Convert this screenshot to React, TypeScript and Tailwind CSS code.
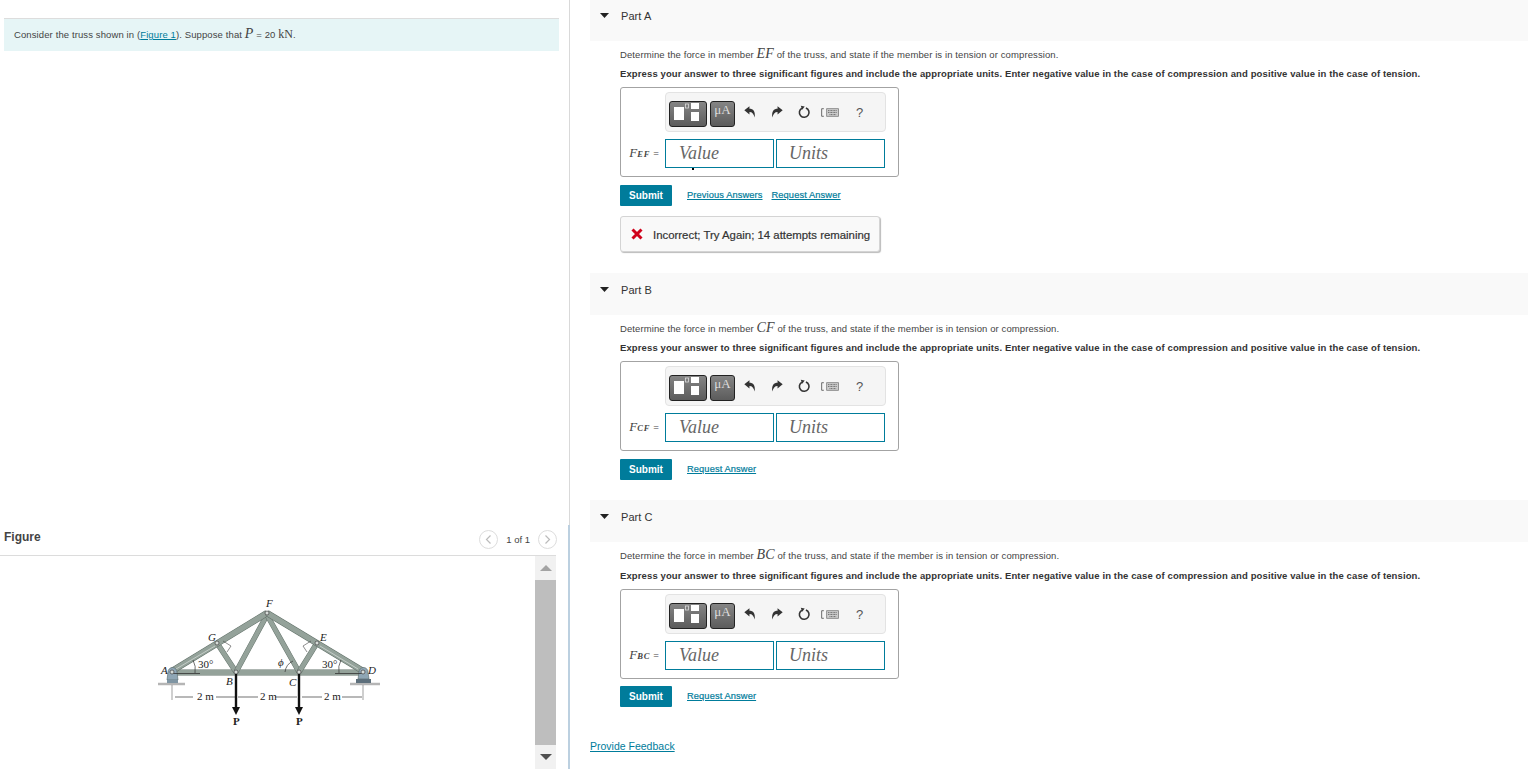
import React from "react";

const M = ({ children }: { children: React.ReactNode }) => (
  <span className="font-['Liberation_Serif',serif] italic text-[14px] leading-none">{children}</span>
);

function Undo({ flip }: { flip?: boolean }) {
  return (
    <svg width="12" height="12" viewBox="0 0 11 11" className={flip ? "-scale-x-100" : ""}>
      <path d="M0.3 4 L5 0.3 V2.6 C8.4 2.6 10.6 4.8 9.8 10.6 C8.9 7.4 7.6 5.6 5 5.6 V7.8 Z" fill="#333" />
    </svg>
  );
}

function Toolbar() {
  return (
    <div className="w-[221px] h-[40px] ml-[44px] bg-[#f5f5f5] border border-[#e3e3e3] rounded-[4px] flex items-center pl-[3px]">
      <div className="mt-[3px] w-[38px] h-[26px] rounded-[3px] border border-[#222] bg-gradient-to-b from-[#858585] to-[#5c5c5c] flex items-center">
        <svg width="36" height="24" viewBox="0 0 36 24">
          <rect x="4" y="5" width="10" height="13" fill="#fff" />
          <rect x="21" y="1" width="8" height="6" fill="#fff" />
          <rect x="21" y="10" width="8" height="9" fill="#fff" />
          <rect x="15.5" y="2" width="3" height="4" fill="none" stroke="#ddd" strokeWidth="0.8" />
        </svg>
      </div>
      <div className="mt-[3px] ml-[3px] w-[25px] h-[26px] rounded-[3px] border border-[#222] bg-gradient-to-b from-[#858585] to-[#5c5c5c] text-[#ddd] text-[13px] leading-[15px] text-center font-['Liberation_Serif',serif]">
        μA
      </div>
      <div className="ml-[9px]"><Undo /></div>
      <div className="ml-[15px]"><Undo flip /></div>
      <svg className="ml-[15px]" width="13" height="14" viewBox="0 0 14 14" fill="none">
        <path d="M8.5 2.6 A5.2 5.2 0 1 1 4.2 2.9" stroke="#333" strokeWidth="1.7" />
        <path d="M3 0.4 L7.2 1 L4.6 4.6 Z" fill="#333" />
      </svg>
      <svg className="ml-[10px]" width="18" height="9" viewBox="0 0 19 9">
        <path d="M3 0.5 H0.7 V8.5 H3" fill="none" stroke="#555" strokeWidth="0.9" />
        <rect x="6" y="0.5" width="12.5" height="8" fill="#ccc" stroke="#777" strokeWidth="0.8" />
        <path d="M7.5 2.5 H17 M7.5 4.5 H17 M9 6.7 H16" stroke="#666" strokeWidth="1" strokeDasharray="1 0.6" />
      </svg>
      <span className="ml-[17px] text-[13px] text-[#555] leading-none">?</span>
    </div>
  );
}

function Part({
  name,
  member,
  sub,
  previous,
  feedback,
  gap,
  headerH,
  labelPad,
  exprGap,
  boxGap,
  submitGap,
}: {
  name: string;
  member: string;
  sub: string;
  previous?: boolean;
  feedback?: boolean;
  gap: string;
  headerH: string;
  labelPad: string;
  exprGap: string;
  boxGap: string;
  submitGap: string;
}) {
  const link = "text-[9.3px] tracking-[0.1px] text-[#007c9b] underline [-webkit-text-stroke:0.2px_#007c9b]";
  return (
    <section className={gap}>
      <div className={`${headerH} ${labelPad} bg-[#f9f9f9] flex items-start`}>
        <svg className="ml-[10px] mt-[3px]" width="9" height="5" viewBox="0 0 9 5">
          <path d="M0 0 H9 L4.5 5 Z" fill="#222" />
        </svg>
        <span className="ml-[12px] text-[11px] leading-[13px] text-[#333] tracking-[0.05px]">Part {name}</span>
      </div>
      <div className="pl-[30px]">
        <p className="mt-[6px] h-[16px] leading-[16px] text-[9.5px] text-[#444] tracking-[0.1px]">
          Determine the force in member <M>{member}</M> of the truss, and state if the member is in tension or compression.
        </p>
        <p className={`${exprGap} h-[16px] leading-[16px] text-[9.5px] font-bold text-[#333] tracking-[0.115px]`}>
          Express your answer to three significant figures and include the appropriate units. Enter negative value in the case of compression and positive value in the case of tension.
        </p>
        <div className={`${boxGap} w-[279px] h-[90px] border border-[#a3a3a3] rounded-[3px] pt-[4px]`}>
          <Toolbar />
          <div className="flex items-center mt-[7px] h-[29px]">
            <span className="w-[44px] text-right pr-[6px] -mt-[1px] text-[#444] font-['Liberation_Serif',serif] italic text-[13px] whitespace-nowrap">
              F<span className="text-[8.5px] font-bold tracking-[0.8px]">{sub}</span> <span className="not-italic text-[10px]">=</span>
            </span>
            <div className="relative w-[109px] h-[29px] border border-[#007c9b] pl-[13px] font-['Liberation_Serif',serif] italic text-[#666] text-[18px] leading-[27px]">
              Value
              {previous && <span className="absolute left-[26px] top-[28px] w-[2px] h-[2px] bg-black" />}
            </div>
            <div className="ml-[2px] w-[109px] h-[29px] border border-[#007c9b] pl-[12px] font-['Liberation_Serif',serif] italic text-[#666] text-[18px] leading-[27px]">Units</div>
          </div>
        </div>
        <div className={`${submitGap} flex items-center h-[21px]`}>
          <div className="w-[52px] h-[21px] bg-[#007c9b] rounded-[1px] text-white font-bold text-[10px] leading-[21px] text-center">Submit</div>
          {previous && <a className={`ml-[15px] ${link}`}>Previous Answers</a>}
          <a className={`${previous ? "ml-[9px]" : "ml-[15px]"} ${link}`}>Request Answer</a>
        </div>
        {feedback && (
          <div className="mt-[10px] w-[260px] h-[36px] bg-[#f9f9f9] border border-[#d4d4d4] rounded-[3px] shadow-[1px_1px_1px_#bbb] flex items-center pl-[10px]">
            <svg width="12" height="12" viewBox="0 0 12 12">
              <path d="M1.5 1.5 L10.5 10.5 M10.5 1.5 L1.5 10.5" stroke="#d0021b" strokeWidth="3" />
            </svg>
            <span className="ml-[10px] mt-[4px] text-[11.4px] text-[#333] [-webkit-text-stroke:0.2px_#333]">Incorrect; Try Again; 14 attempts remaining</span>
          </div>
        )}
      </div>
    </section>
  );
}

function Truss() {
  const m = "#94a29a";
  const e = "#5f6e66";
  const bar = (x1: number, y1: number, x2: number, y2: number, w = 5) => (
    <g>
      <line x1={x1} y1={y1} x2={x2} y2={y2} stroke={e} strokeWidth={w + 0.8} />
      <line x1={x1} y1={y1} x2={x2} y2={y2} stroke={m} strokeWidth={w} />
    </g>
  );
  const pin = (x: number, y: number) => <circle cx={x} cy={y} r="2" fill="#d6dcd8" stroke="#444" strokeWidth="0.7" />;
  return (
    <svg width="250" height="140" viewBox="0 0 250 140" className="font-['Liberation_Serif',serif]" fill="#222">
      <path d="M18 94 H45" stroke="#b5b5b5" strokeWidth="2.5" />
      <path d="M210 94 H240" stroke="#b5b5b5" strokeWidth="2.5" />
      {bar(32, 82.5, 223, 82.5, 5)}
      {bar(77, 53, 96, 82, 4.5)}
      {bar(96, 82, 127, 25, 4.5)}
      {bar(159, 82, 127, 25, 4.5)}
      {bar(177, 53, 159, 82, 4.5)}
      {bar(32, 81, 127, 23, 5.5)}
      {bar(223, 81, 127, 23, 5.5)}
      <path d="M36 79 L75 56 M218 79 L180 56" stroke="#e4e9e6" strokeWidth="0.6" />
      <path d="M83 51 L91 56 L87 62 M171 51 L163 56 L167 62" fill="none" stroke="#444" strokeWidth="0.6" />
      <path d="M27 90 L28 82 A4.5 4.5 0 0 1 37 82 L38 90 Z" fill="#8fa6b5" stroke="#566" strokeWidth="0.6" />
      <rect x="27" y="90" width="11" height="3" fill="#7f95a3" />
      <path d="M218 89 L219 82 A4.5 4.5 0 0 1 228 82 L229 89 Z" fill="#8fa6b5" stroke="#566" strokeWidth="0.6" />
      <rect x="216" y="89" width="15" height="4" fill="#5d6f7b" />
      <path d="M33 83.5 H60 M195 83.5 H223" stroke="#333" strokeWidth="0.8" />
      <path d="M53 70 A20 20 0 0 1 55 83 M201 70 A20 20 0 0 0 199 83 M145 82 A14 14 0 0 1 153 71" fill="none" stroke="#333" strokeWidth="0.7" />
      {pin(32, 82)}{pin(96, 82)}{pin(159, 82)}{pin(223, 82)}{pin(77, 53)}{pin(177, 53)}{pin(127, 23)}
      <path d="M32 95 V110 M223 95 V110" stroke="#777" strokeWidth="0.7" />
      <path d="M35 107 H53 M76 107 H95 M98 107 H118 M135 107 H157 M162 107 H182 M202 107 H222" stroke="#333" strokeWidth="0.7" />
      <path d="M96 84 V118" stroke="#111" strokeWidth="2.4" />
      <path d="M92 117 H100 L96 125 Z" fill="#111" />
      <path d="M159 84 V118" stroke="#111" strokeWidth="2.4" />
      <path d="M155 117 H163 L159 125 Z" fill="#111" />
      <g fontSize="11">
        <text x="57" y="110">2 m</text>
        <text x="120" y="110">2 m</text>
        <text x="184" y="110">2 m</text>
        <text x="58" y="78">30°</text>
        <text x="182" y="78">30°</text>
      </g>
      <g fontSize="11" fontStyle="italic">
        <text x="21" y="84">A</text>
        <text x="86" y="95">B</text>
        <text x="149" y="96">C</text>
        <text x="228" y="84">D</text>
        <text x="180" y="51">E</text>
        <text x="126" y="17">F</text>
        <text x="68" y="51">G</text>
        <text x="138" y="76">ϕ</text>
      </g>
      <g fontSize="11" fontWeight="bold">
        <text x="93" y="135">P</text>
        <text x="156" y="135">P</text>
      </g>
    </svg>
  );
}

function Pager() {
  const C = ({ d, c }: { d: string; c: string }) => (
    <div className="w-[19px] h-[19px] rounded-full border border-[#ddd] flex items-center justify-center">
      <svg width="7" height="9" viewBox="0 0 7 9" fill="none">
        <path d={d} stroke={c} strokeWidth="1.2" />
      </svg>
    </div>
  );
  return (
    <div className="flex items-center">
      <C d="M5.5 0.5 L1.5 4.5 L5.5 8.5" c="#bbb" />
      <span className="mx-[8px] text-[9.5px] text-[#444] mt-[1px]">1 of 1</span>
      <C d="M1.5 0.5 L5.5 4.5 L1.5 8.5" c="#bbb" />
    </div>
  );
}

export default function App() {
  return (
    <div className="h-[769px] w-[1528px] overflow-hidden flex bg-white font-['Liberation_Sans',Arial,sans-serif]">
      <aside className="w-[570px] shrink-0 flex flex-col">
        <div className="h-[525px] border-r border-[#d9d9d9] pt-[18px]">
          <div className="ml-[4px] w-[555px] h-[33px] bg-[#e6f5f6] border-t border-[#ddd] pl-[10px] pb-[2px] flex items-center text-[9.5px] text-[#444] tracking-[0.11px]">
            <span>
              Consider the truss shown in (<a className="text-[#007c9b] underline">Figure 1</a>). Suppose that <M>P</M> = 20 <span className="font-['Liberation_Serif',serif] text-[12px]">kN</span>.
            </span>
          </div>
        </div>
        <div className="flex-1 border-r-2 border-[#bcd0e0] flex flex-col">
          <div className="h-[30px] w-[559px] flex justify-between pl-[4px] pr-[2px]">
            <span className="text-[12px] font-bold text-[#444] mt-[3px]">Figure</span>
            <div className="mt-[5px]"><Pager /></div>
          </div>
          <div className="flex-1 w-[556px] border-t border-[#dcdcdc] flex">
            <div className="w-[535px] pl-[140px] pt-[34px]"><Truss /></div>
            <div className="w-[21px] bg-[#f1f1f1] flex flex-col items-center">
              <svg className="mt-[9px]" width="12" height="6" viewBox="0 0 12 6"><path d="M0 6 H12 L6 0 Z" fill="#a3a3a3" /></svg>
              <div className="mt-[9px] w-full flex-1 bg-[#bebebe]" />
              <svg className="my-[9px]" width="12" height="6" viewBox="0 0 12 6"><path d="M0 0 H12 L6 6 Z" fill="#505050" /></svg>
            </div>
          </div>
        </div>
      </aside>
      <main className="flex-1 pl-[20px]">
        <Part name="A" member="EF" sub="EF" previous feedback gap="mb-[21px]" headerH="h-[41px]" labelPad="pt-[10px]" exprGap="mt-[3px]" boxGap="mt-[5px]" submitGap="mt-[8px]" />
        <Part name="B" member="CF" sub="CF" gap="mb-[20px]" headerH="h-[42px]" labelPad="pt-[11px]" exprGap="mt-[3px]" boxGap="mt-[5px]" submitGap="mt-[8px]" />
        <Part name="C" member="BC" sub="BC" gap="mb-[26px]" headerH="h-[42px]" labelPad="pt-[11px]" exprGap="mt-[4px]" boxGap="mt-[5px]" submitGap="mt-[7px]" />
        <a className="text-[10.5px] text-[#007c9b] underline">Provide Feedback</a>
      </main>
    </div>
  );
}
